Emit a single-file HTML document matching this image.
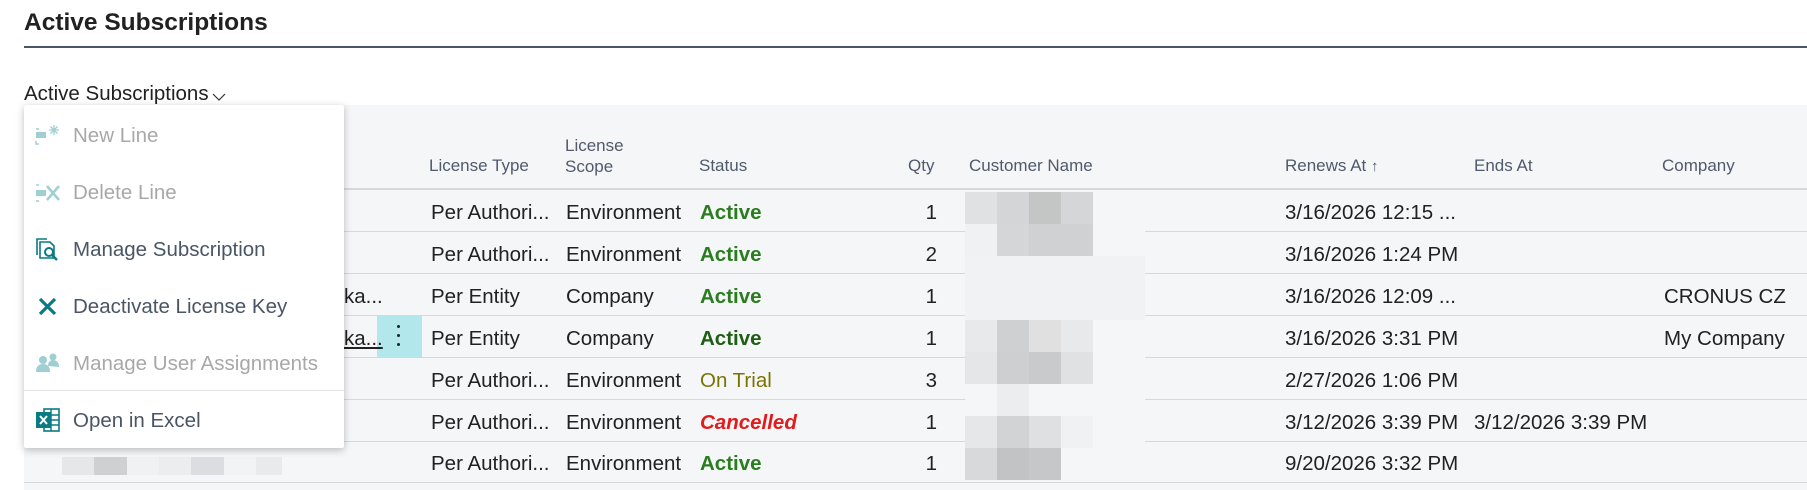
<!DOCTYPE html>
<html><head><meta charset="utf-8"><style>
*{margin:0;padding:0;box-sizing:border-box}
body{width:1807px;height:490px;overflow:hidden;background:#fff;font-family:"Liberation Sans",sans-serif;position:relative;color:#212121}
.a{position:absolute;white-space:nowrap}
.h{font-size:17px;color:#505a6b}
.c{font-size:20.5px;color:#212121}
.ln{position:absolute;height:1px;background:#d6d8dc;left:24px;right:0}
.px{position:absolute;width:32px;height:32px}
.mi{position:absolute;left:73px;font-size:20.5px;color:#4a5565}
.dis{color:#a8a8a8}
.q{width:40px;text-align:right}
.r{margin-top:2px}
</style></head><body>
<div class="a" style="left:24px;top:9px;font-size:24.5px;font-weight:bold;color:#212121">Active Subscriptions</div>
<div class="a" style="left:24px;top:46px;right:0;height:2px;background:#4c5566"></div>
<div class="a" style="left:24px;top:82px;font-size:20.5px;color:#212121">Active Subscriptions</div>
<svg class="a" style="left:212px;top:93px" width="14" height="9"><path d="M1 1 L7 7 L13 1" fill="none" stroke="#333" stroke-width="1.2"/></svg>

<div class="a" style="left:24px;top:105px;right:0;bottom:0;background:#f5f6f8"></div>
<div class="ln" style="top:188px;height:2px"></div>
<div class="ln" style="top:231px"></div><div class="ln" style="top:273px"></div><div class="ln" style="top:315px"></div><div class="ln" style="top:357px"></div><div class="ln" style="top:399px"></div><div class="ln" style="top:441px"></div><div class="ln" style="top:482px"></div>
<div class="a" style="left:377px;top:316px;width:45px;height:41px;background:#b2e7ec"></div>
<div class="a" style="left:397px;top:325px;width:3px;height:3px;border-radius:2px;background:#222"></div>
<div class="a" style="left:397px;top:334px;width:3px;height:3px;border-radius:2px;background:#222"></div>
<div class="a" style="left:397px;top:343px;width:3px;height:3px;border-radius:2px;background:#222"></div>

<div class="a h" style="left:429px;top:156px">License Type</div>
<div class="a h" style="left:565px;top:135px;line-height:21px">License<br>Scope</div>
<div class="a h" style="left:699px;top:156px">Status</div>
<div class="a h" style="left:908px;top:156px">Qty</div>
<div class="a h" style="left:969px;top:156px">Customer Name</div>
<div class="a h" style="left:1285px;top:156px">Renews At <span style="font-size:15px">&#8593;</span></div>
<div class="a h" style="left:1474px;top:156px">Ends At</div>
<div class="a h" style="left:1662px;top:156px">Company</div>

<div class="a c" style="left:344px;top:285px">ka...</div>
<div class="a c" style="left:344px;top:327px;text-decoration:underline">ka...</div>

<div class="a c" style="left:431px;top:201px">Per Authori...</div><div class="a c" style="left:566px;top:201px">Environment</div><div class="a c" style="left:700px;top:201px;font-weight:bold;color:#2a7d1e">Active</div><div class="a c q" style="left:897px;top:201px">1</div><div class="a c" style="left:1285px;top:201px">3/16/2026 12:15 ...</div>
<div class="a c" style="left:431px;top:243px">Per Authori...</div><div class="a c" style="left:566px;top:243px">Environment</div><div class="a c" style="left:700px;top:243px;font-weight:bold;color:#2a7d1e">Active</div><div class="a c q" style="left:897px;top:243px">2</div><div class="a c" style="left:1285px;top:243px">3/16/2026 1:24 PM</div>
<div class="a c" style="left:431px;top:285px">Per Entity</div><div class="a c" style="left:566px;top:285px">Company</div><div class="a c" style="left:700px;top:285px;font-weight:bold;color:#2a7d1e">Active</div><div class="a c q" style="left:897px;top:285px">1</div><div class="a c" style="left:1285px;top:285px">3/16/2026 12:09 ...</div><div class="a c" style="left:1664px;top:285px">CRONUS CZ</div>
<div class="a c" style="left:431px;top:327px">Per Entity</div><div class="a c" style="left:566px;top:327px">Company</div><div class="a c" style="left:700px;top:327px;font-weight:bold;color:#1f5f14">Active</div><div class="a c q" style="left:897px;top:327px">1</div><div class="a c" style="left:1285px;top:327px">3/16/2026 3:31 PM</div><div class="a c" style="left:1664px;top:327px">My Company</div>
<div class="a c" style="left:431px;top:369px">Per Authori...</div><div class="a c" style="left:566px;top:369px">Environment</div><div class="a c" style="left:700px;top:369px;color:#7a7300">On Trial</div><div class="a c q" style="left:897px;top:369px">3</div><div class="a c" style="left:1285px;top:369px">2/27/2026 1:06 PM</div>
<div class="a c" style="left:431px;top:411px">Per Authori...</div><div class="a c" style="left:566px;top:411px">Environment</div><div class="a c" style="left:700px;top:411px;font-weight:bold;font-style:italic;color:#e01c1c">Cancelled</div><div class="a c q" style="left:897px;top:411px">1</div><div class="a c" style="left:1285px;top:411px">3/12/2026 3:39 PM</div><div class="a c" style="left:1474px;top:411px">3/12/2026 3:39 PM</div>
<div class="a c" style="left:431px;top:452px">Per Authori...</div><div class="a c" style="left:566px;top:452px">Environment</div><div class="a c" style="left:700px;top:452px;font-weight:bold;color:#2a7d1e">Active</div><div class="a c q" style="left:897px;top:452px">1</div><div class="a c" style="left:1285px;top:452px">9/20/2026 3:32 PM</div>

<div class="a" style="left:965px;top:192px;width:180px;height:288px;background:#f5f6f8"></div>
<div class="px" style="left:965px;top:192px;background:#e0e1e3"></div><div class="px" style="left:997px;top:192px;background:#d4d5d7"></div><div class="px" style="left:1029px;top:192px;background:#c4c6c6"></div><div class="px" style="left:1061px;top:192px;background:#d5d6d8"></div>
<div class="px" style="left:965px;top:224px;background:#f0f1f3"></div><div class="px" style="left:997px;top:224px;background:#d5d6d8"></div><div class="px" style="left:1029px;top:224px;background:#d0d1d3"></div><div class="px" style="left:1061px;top:224px;background:#d0d1d3"></div>
<div class="a" style="left:965px;top:256px;width:180px;height:64px;background:#f1f2f4"></div>
<div class="px" style="left:965px;top:320px;background:#e8e9eb"></div><div class="px" style="left:997px;top:320px;background:#cfd0d2"></div><div class="px" style="left:1029px;top:320px;background:#e0e0e0"></div><div class="px" style="left:1061px;top:320px;background:#e8e9eb"></div>
<div class="px" style="left:965px;top:352px;background:#e5e6e8"></div><div class="px" style="left:997px;top:352px;background:#cdcfd1"></div><div class="px" style="left:1029px;top:352px;background:#c9cacc"></div><div class="px" style="left:1061px;top:352px;background:#e0e1e3"></div>
<div class="px" style="left:997px;top:384px;background:#ecedef"></div>
<div class="px" style="left:965px;top:416px;background:#e6e7e9"></div><div class="px" style="left:997px;top:416px;background:#d2d3d5"></div><div class="px" style="left:1029px;top:416px;background:#dfe0e2"></div><div class="px" style="left:1061px;top:416px;background:#f0f1f3"></div>
<div class="px" style="left:965px;top:448px;background:#d8d9db"></div><div class="px" style="left:997px;top:448px;background:#c2c3c5"></div><div class="px" style="left:1029px;top:448px;background:#c6c7c9"></div>

<div class="a" style="left:62px;top:457px;width:32px;height:18px;background:#e6e7e9"></div>
<div class="a" style="left:94px;top:457px;width:33px;height:18px;background:#cfd0d2"></div>
<div class="a" style="left:127px;top:457px;width:32px;height:18px;background:#f0f1f3"></div>
<div class="a" style="left:159px;top:457px;width:32px;height:18px;background:#ecedef"></div>
<div class="a" style="left:191px;top:457px;width:33px;height:18px;background:#dcdde0"></div>
<div class="a" style="left:224px;top:457px;width:32px;height:18px;background:#f2f3f5"></div>
<div class="a" style="left:256px;top:457px;width:26px;height:18px;background:#e9eaec"></div>

<div class="a" style="left:24px;top:105px;width:320px;height:343px;background:#fff;box-shadow:0 2px 8px rgba(0,0,0,.25);border-radius:2px"></div>
<div class="a" style="left:24px;top:390px;width:320px;height:1px;background:#e3e3e3"></div>
<svg class="a" style="left:35px;top:124px" width="26" height="24"><rect x="1" y="8" width="10" height="6" fill="#9fcfd3"/><path d="M1 5h3M1 17v3h3" stroke="#9fcfd3" stroke-width="1.5" fill="none"/><path d="M19 1v10M14 6h10M15.5 2.5l7 7M22.5 2.5l-7 7" stroke="#9fcfd3" stroke-width="1.3"/></svg>
<svg class="a" style="left:35px;top:181px" width="26" height="24"><rect x="1" y="9" width="10" height="6" fill="#9fcfd3"/><path d="M1 4h3M1 20h3" stroke="#9fcfd3" stroke-width="1.5"/><path d="M12 5l12 14M24 5L12 19" stroke="#9fcfd3" stroke-width="2.5"/></svg>
<svg class="a" style="left:35px;top:237px" width="26" height="26"><path d="M2 18V2h10" stroke="#0a7b83" stroke-width="1.6" fill="none"/><path d="M5 21V5h10l4 4v12z" stroke="#0a7b83" stroke-width="1.6" fill="none"/><circle cx="14" cy="15" r="4" stroke="#0a7b83" stroke-width="2" fill="none"/><path d="M17 18l5 5" stroke="#0a7b83" stroke-width="2.4"/></svg>
<svg class="a" style="left:38px;top:297px" width="20" height="20"><path d="M2 2l15 15M17 2L2 17" stroke="#0a7b83" stroke-width="3.2"/></svg>
<svg class="a" style="left:35px;top:352px" width="26" height="22"><circle cx="8" cy="8" r="4" fill="#9fcfd3"/><path d="M1 20c0-6 3-8 7-8s7 2 7 8z" fill="#9fcfd3"/><circle cx="18" cy="5" r="3.5" fill="#9fcfd3"/><path d="M13 14c0-4 2-6 5-6s6 2 6 7z" fill="#9fcfd3"/></svg>
<svg class="a" style="left:35px;top:407px" width="26" height="26"><rect x="9" y="2" width="15" height="22" fill="none" stroke="#0a7b83" stroke-width="1.6"/><path d="M9 8h15M9 13h15M9 18h15M16 2v22" stroke="#0a7b83" stroke-width="1.4"/><rect x="1" y="5" width="15" height="16" fill="#0a7b83"/><path d="M5 9l7 8M12 9l-7 8" stroke="#fff" stroke-width="2"/></svg>
<div class="mi dis" style="top:124px">New Line</div>
<div class="mi dis" style="top:181px">Delete Line</div>
<div class="mi" style="top:238px">Manage Subscription</div>
<div class="mi" style="top:295px">Deactivate License Key</div>
<div class="mi dis" style="top:352px">Manage User Assignments</div>
<div class="mi" style="top:409px">Open in Excel</div>
</body></html>
